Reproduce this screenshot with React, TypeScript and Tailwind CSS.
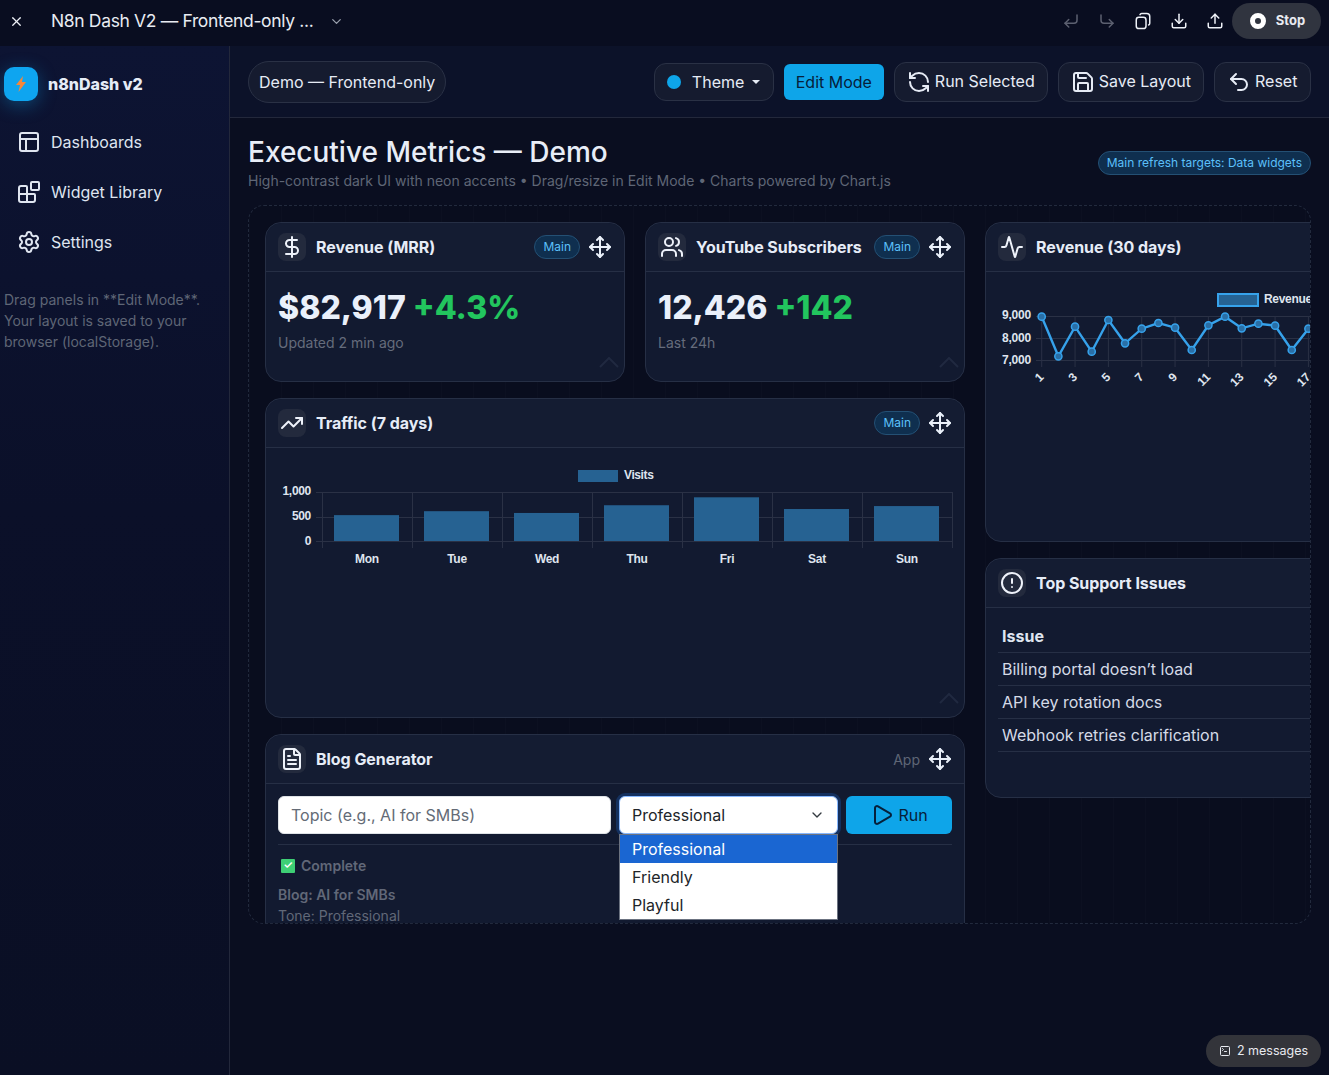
import React from 'react';
import {
  X, ChevronDown, CornerDownLeft, CornerDownRight, Download, Upload, Settings, Blocks,
  DollarSign, Users, Activity, TrendingUp, FileText, CircleAlert, Move, Play, RefreshCcw, Save, Undo2, SquareTerminal,
} from 'lucide-react';

function Badge({ children }: any) {
  return (
    <span className="rounded-full border border-[#245074] bg-[#0f2f4f] px-2 h-6 flex items-center text-[12px] text-[#5cc0fa]">
      {children}
    </span>
  );
}

function PanelHeader({ icon, title, right }: any) {
  return (
    <div className="h-[49px] shrink-0 flex items-center px-3 rounded-t-2xl border-b border-[#262f45] bg-[#141c32]">
      <div className="w-7 h-7 rounded-lg bg-[#232a3d] flex items-center justify-center text-[#eef2fa] shrink-0">{icon}</div>
      <span className="ml-2.5 text-[16px] font-bold text-[#e6ecf7] whitespace-nowrap tracking-[-0.05px]">{title}</span>
      {right && <div className="ml-auto flex items-center gap-2">{right}</div>}
    </div>
  );
}

function Panel({ className, children }: any) {
  return (
    <div className={'relative shrink-0 rounded-2xl border border-[#262f45] bg-[#121a30] overflow-hidden flex flex-col ' + className}>
      {children}
    </div>
  );
}

function Corner() {
  return (
    <svg className="absolute right-[5px] bottom-[13px] text-[#202940]" width="20" height="11" viewBox="0 0 20 11" fill="none" stroke="currentColor" strokeWidth="2">
      <path d="M1 10 L10 1 L19 10" />
    </svg>
  );
}

const moveIcon = <Move size={24} strokeWidth={2} className="text-[#eaf0fa]" />;

function Stat({ value, delta, note }: any) {
  return (
    <div className="px-3 pt-[15px]">
      <div className="text-[32px] leading-[41px] font-extrabold whitespace-nowrap">
        <span className="text-[#eaf0fa]">{value}</span> <span className="text-[#22c55e]">{delta}</span>
      </div>
      <div className="mt-[5px] text-[14px] leading-5 text-[#656c7c]">{note}</div>
    </div>
  );
}

function TrafficChart() {
  const days = ['Mon', 'Tue', 'Wed', 'Thu', 'Fri', 'Sat', 'Sun'];
  const vals = [526, 606, 570, 727, 888, 650, 710];
  const f = 'Liberation Sans, Arial, sans-serif';
  return (
    <svg width="698" height="130" className="block">
      <g stroke="#2a3145" strokeWidth="1">
        {[44, 69, 93].map((y) => <line key={y} x1="50" x2="686" y1={y + 0.5} y2={y + 0.5} />)}
        {[0, 1, 2, 3, 4, 5, 6, 7].map((i) => <line key={i} x1={56 + i * 90 + 0.5} x2={56 + i * 90 + 0.5} y1="44" y2="100" />)}
      </g>
      <rect x="312" y="22" width="40" height="12" fill="#266292" />
      <text x="358" y="31" fontFamily={f} fontSize="12" fontWeight="700" fill="#dfe4ee" style={{ letterSpacing: '-0.4px' }}>Visits</text>
      {vals.map((v, i) => (
        <rect key={i} x={68 + i * 90} y={93 - v * 0.0492} width="65" height={v * 0.0492} fill="#266292" />
      ))}
      {['1,000', '500', '0'].map((t, i) => (
        <text key={t} x="45" y={47 + i * 25} textAnchor="end" fontFamily={f} fontSize="12" fontWeight="700" fill="#dfe4ee" style={{ letterSpacing: '-0.3px' }}>{t}</text>
      ))}
      {days.map((d, i) => (
        <text key={d} x={101 + i * 90} y="115" textAnchor="middle" fontFamily={f} fontSize="12" fontWeight="700" fill="#dfe4ee" style={{ letterSpacing: '-0.3px' }}>{d}</text>
      ))}
    </svg>
  );
}

function RevenueChart() {
  const f = 'Liberation Sans, Arial, sans-serif';
  // y positions read off the reference, one per day
  const ys = [44.7, 84.3, 54.7, 79.7, 48, 71.3, 56.7, 51, 55.7, 78, 53.3, 44.7, 56.3, 51.7, 53.7, 78, 56.7];
  const pts = ys.map((y, i) => [55.7 + i * 16.67, y]);
  const path = pts.map((p, i) => (i ? 'L' : 'M') + p[0] + ' ' + p[1]).join(' ');
  const ticks = pts.map((p, i) => ({ x: p[0], n: i + 1 })).filter((t) => t.n % 2 === 1);
  return (
    <svg width="358" height="130" className="block">
      <g stroke="#2a3145" strokeWidth="1">
        {[44.5, 66.5, 88.5].map((y) => <line key={y} x1="50" x2="358" y1={y} y2={y} />)}
        {ticks.map((t) => <line key={t.n} x1={t.x} x2={t.x} y1="44" y2="95" />)}
      </g>
      <rect x="232" y="22" width="40" height="12" fill="#266292" stroke="#36a2eb" strokeWidth="2" />
      <text x="278" y="31" fontFamily={f} fontSize="12" fontWeight="700" fill="#dfe4ee" style={{ letterSpacing: '-0.3px' }}>Revenue</text>
      {['9,000', '8,000', '7,000'].map((t, i) => (
        <text key={t} x="45" y={47 + i * 22.5} textAnchor="end" fontFamily={f} fontSize="12" fontWeight="700" fill="#dfe4ee" style={{ letterSpacing: '-0.2px' }}>{t}</text>
      ))}
      <path d={path} fill="none" stroke="#36a2eb" strokeWidth="2.4" />
      {pts.map((p) => <circle key={p[0]} cx={p[0]} cy={p[1]} r="3.6" fill="#2a6fa6" stroke="#36a2eb" strokeWidth="1.5" />)}
      {ticks.map((t) => (
        <text key={t.n} transform={`translate(${t.x} 103) rotate(-45)`} textAnchor="end" dominantBaseline="central" fontFamily={f} fontSize="12" fontWeight="700" fill="#dfe4ee">{t.n}</text>
      ))}
    </svg>
  );
}

function TopButton({ icon, label, className = '' }: any) {
  return (
    <button className={'h-10 pl-3 pr-3 flex items-center gap-1 rounded-xl border border-[#2a3145] bg-[#151b2f] text-[16px] text-[#e6ebf5] whitespace-nowrap ' + className}>
      {icon}
      <span className="-mt-px">{label}</span>
    </button>
  );
}

export default function App() {
  return (
    <div className="h-[1075px] w-full overflow-hidden flex flex-col bg-[#0a0f24] font-['Inter',sans-serif]">
      {/* window bar */}
      <div className="h-[46px] shrink-0 bg-[#090d20] flex items-center pl-[9px] pr-2 pb-1">
        <X size={15} strokeWidth={2} className="text-[#eef1f7]" />
        <span className="ml-[27px] text-[17.5px] text-[#e8ebf2] tracking-[-0.35px] whitespace-nowrap">N8n Dash V2 — Frontend-only ...</span>
        <ChevronDown size={15} className="ml-4 text-[#9aa0ad]" />
        <div className="ml-auto flex items-center gap-[18px] text-[#eef1f7]">
          <CornerDownLeft size={18} className="text-[#5c6070]" />
          <CornerDownRight size={18} className="text-[#5c6070]" />
          <svg width="18" height="18" viewBox="0 0 24 24" fill="none" stroke="currentColor" strokeWidth="2" strokeLinecap="round" strokeLinejoin="round"><rect x="3" y="7" width="13" height="15" rx="3.5" /><path d="M8 3.5A2.5 2.5 0 0 1 10.5 2H17a4 4 0 0 1 4 4v9a2.5 2.5 0 0 1-1.5 2.3" /></svg>
          <Download size={18} />
          <Upload size={18} />
        </div>
        <button className="ml-2 h-9 w-[89px] rounded-full bg-[#30343f] flex items-center justify-center gap-2.5 text-[13px] font-bold text-[#e8eaf0]">
          <span className="ml-0.5 w-4 h-4 rounded-full border-[5px] border-white bg-[#30343f]" />
          Stop
        </button>
      </div>

      <div className="flex-1 min-h-0 flex">
        {/* sidebar */}
        <aside className="w-[230px] shrink-0 border-r border-[#23283b] bg-[linear-gradient(180deg,#0d1433_0%,#0b1029_45%,#0a0f24_100%)] pl-1">
          <div className="h-[34px] mt-[21px] flex items-center gap-2.5">
            <div className="w-[34px] h-[34px] rounded-[10px] bg-[#0ea5f0] shadow-[0_4px_18px_rgba(14,165,240,0.35)] flex items-center justify-center">
              <svg width="12" height="16" viewBox="0 0 12 16"><path d="M8 0 L1 9 H5 L3.5 16 L11 6 H7 Z" fill="#f5873a" /></svg>
            </div>
            <span className="text-[16px] font-extrabold text-[#e6ecf7]">n8nDash v2</span>
          </div>
          <nav className="mt-4 flex flex-col">
            <div className="h-[50px] pl-[13px] flex items-center gap-2.5 text-[16px] text-[#dfe5f0]">
              <svg width="24" height="24" viewBox="0 0 24 24" fill="none" stroke="currentColor" strokeWidth="2" strokeLinecap="round" strokeLinejoin="round"><rect x="3" y="3" width="18" height="18" rx="2" /><path d="M3 9h18M9 21V9" /></svg>
              Dashboards
            </div>
            <div className="h-[50px] pl-[13px] flex items-center gap-2.5 text-[16px] text-[#dfe5f0]">
              <Blocks size={24} />
              Widget Library
            </div>
            <div className="h-[50px] pl-[13px] flex items-center gap-2.5 text-[16px] text-[#dfe5f0]">
              <Settings size={24} />
              Settings
            </div>
          </nav>
          <p className="mt-[22px] text-[14px] leading-[21px] text-[#5f6676] w-[215px]">
            Drag panels in **Edit Mode**. Your layout is saved to your browser (localStorage).
          </p>
        </aside>

        <main className="flex-1 min-w-0 flex flex-col">
          {/* topbar */}
          <div className="h-[72px] shrink-0 border-b border-[#23283b] bg-[#0c1229] flex items-center pl-[18px] pr-[18px]">
            <div className="h-[42px] px-2.5 rounded-full border border-[#2a3145] bg-[#151b2f] flex items-center text-[16px] text-[#e6ebf5] whitespace-nowrap">
              Demo — Frontend-only
            </div>
            <div className="ml-auto flex items-center gap-2.5">
              <button className="h-[38px] w-[120px] rounded-xl border border-[#2a3145] bg-[#151b2f] flex items-center pl-3 text-[16px] text-[#e6ebf5]">
                <span className="w-[14px] h-[14px] rounded-full bg-[#0ea5e9]" />
                <span className="ml-[11px]">Theme</span>
                <span className="ml-2 w-0 h-0 border-x-[4px] border-x-transparent border-t-[4px] border-t-[#e6ebf5]" />
              </button>
              <button className="h-9 w-[100px] rounded-md bg-[#0ea5e9] text-[16px] text-[#06203a]">Edit Mode</button>
              <TopButton icon={<RefreshCcw size={24} />} label="Run Selected" />
              <TopButton icon={<Save size={24} />} label="Save Layout" />
              <TopButton icon={<Undo2 size={24} />} label="Reset" className="w-[97px]" />
            </div>
          </div>

          {/* page */}
          <div className="flex-1 min-h-0 pl-[18px] pr-[18px] bg-[#0a0e20]">
            <div className="flex items-start justify-between">
              <div className="pt-[16px]">
                <h1 className="text-[28px] leading-9 font-medium text-[#e8edf7]">Executive Metrics — Demo</h1>
                <p className="mt-px text-[14px] leading-5 text-[#5f6676]">High-contrast dark UI with neon accents • Drag/resize in Edit Mode • Charts powered by Chart.js</p>
              </div>
              <span className="mt-[33px] h-6 flex items-center px-2 rounded-full border border-[#245074] bg-[#0f2f4f] text-[12px] text-[#5cc0fa] whitespace-nowrap">Main refresh targets: Data widgets</span>
            </div>

            {/* canvas */}
            <div className="relative mt-[14px] h-[719px] rounded-2xl border border-dashed border-[#222a3d] overflow-hidden flex gap-5 pl-4 pt-4 bg-[#090d1e] bg-[linear-gradient(90deg,rgba(255,255,255,0.012)_1px,transparent_1px)] bg-[size:32px_32px]">
              <div className="w-[700px] shrink-0 flex flex-col gap-4">
                <div className="flex gap-5">
                  <Panel className="w-[360px] h-[160px]">
                    <PanelHeader icon={<DollarSign size={24} />} title="Revenue (MRR)" right={<><Badge>Main</Badge>{moveIcon}</>} />
                    <Stat value="$82,917" delta="+4.3%" note="Updated 2 min ago" />
                    <Corner />
                  </Panel>
                  <Panel className="w-[320px] h-[160px]">
                    <PanelHeader icon={<Users size={24} />} title="YouTube Subscribers" right={<><Badge>Main</Badge>{moveIcon}</>} />
                    <Stat value="12,426" delta="+142" note="Last 24h" />
                    <Corner />
                  </Panel>
                </div>
                <Panel className="w-[700px] h-[320px]">
                  <PanelHeader icon={<TrendingUp size={24} />} title="Traffic (7 days)" right={<><Badge>Main</Badge>{moveIcon}</>} />
                  <TrafficChart />
                  <Corner />
                </Panel>
                <Panel className="w-[700px] h-[260px] overflow-visible">
                  <PanelHeader icon={<FileText size={24} />} title="Blog Generator" right={<><span className="text-[14px] text-[#5f6676]">App</span>{moveIcon}</>} />
                  <div className="px-3 pt-3">
                    <div className="flex gap-2 pb-[10px] border-b border-[#262f45]">
                      <input readOnly placeholder="Topic (e.g., AI for SMBs)" className="w-[333px] h-[38px] rounded-md bg-white px-3 text-[16px] text-[#1f2937] placeholder:text-[#646b76] border border-[#dee2e6] outline-none" />
                      <div className="relative w-[219px] h-[38px]">
                        <div className="h-[38px] rounded-md bg-white border border-[#86b7fe] shadow-[0_0_0_3px_#14305e] px-3 flex items-center justify-between text-[16px] text-[#212529]">
                          Professional
                          <ChevronDown size={16} strokeWidth={2} className="text-[#343a40]" />
                        </div>
                        <div className="absolute z-10 left-0 top-[38px] w-[219px] bg-white border border-[#6b7280] text-[16px] text-[#212529] leading-7">
                          <div className="bg-[#1a66d2] text-white px-3">Professional</div>
                          <div className="px-3">Friendly</div>
                          <div className="px-3">Playful</div>
                        </div>
                      </div>
                      <button className="w-[106px] h-[38px] rounded-md bg-[#0ea5e9] flex items-center justify-center gap-1 text-[16px] text-[#06203a]">
                        <Play size={24} strokeWidth={2} />
                        Run
                      </button>
                    </div>
                    <div className="mt-[10px] flex items-center gap-[6px] text-[14px] font-semibold text-[#616878]">
                      <span className="ml-[3px] w-[14px] h-[14px] rounded-[1px] bg-[#3ecf75] flex items-center justify-center text-white text-[11px] leading-none">✓</span>
                      Complete
                    </div>
                    <div className="mt-3 text-[14px] leading-[13px] font-semibold text-[#616878]">Blog: AI for SMBs</div>
                    <div className="mt-2 text-[14px] leading-[13px] text-[#616878]">Tone: Professional</div>
                  </div>
                </Panel>
              </div>
              <div className="w-[360px] shrink-0 flex flex-col gap-4">
                <Panel className="h-[320px]">
                  <PanelHeader icon={<Activity size={24} />} title="Revenue (30 days)" />
                  <RevenueChart />
                </Panel>
                <Panel className="h-[240px]">
                  <PanelHeader icon={<CircleAlert size={24} />} title="Top Support Issues" />
                  <div className="px-3 pt-3 text-[16px] text-[#d5dbe7]">
                    <div className="h-[33px] flex items-center px-1 font-bold border-b border-[#262f45] text-[#dfe5f0]">Issue</div>
                    <div className="h-[33px] flex items-center px-1 border-b border-[#262f45]">Billing portal doesn’t load</div>
                    <div className="h-[33px] flex items-center px-1 border-b border-[#262f45]">API key rotation docs</div>
                    <div className="h-[33px] flex items-center px-1 border-b border-[#262f45]">Webhook retries clarification</div>
                  </div>
                </Panel>
              </div>
            </div>
          </div>
        </main>
      </div>

      <div className="fixed right-2 bottom-2 h-[32px] w-[115px] rounded-full bg-[#33343a] flex items-center justify-center gap-1.5 text-[12.5px] text-[#e8eaf0]">
        <SquareTerminal size={12} />
        2 messages
      </div>
    </div>
  );
}
